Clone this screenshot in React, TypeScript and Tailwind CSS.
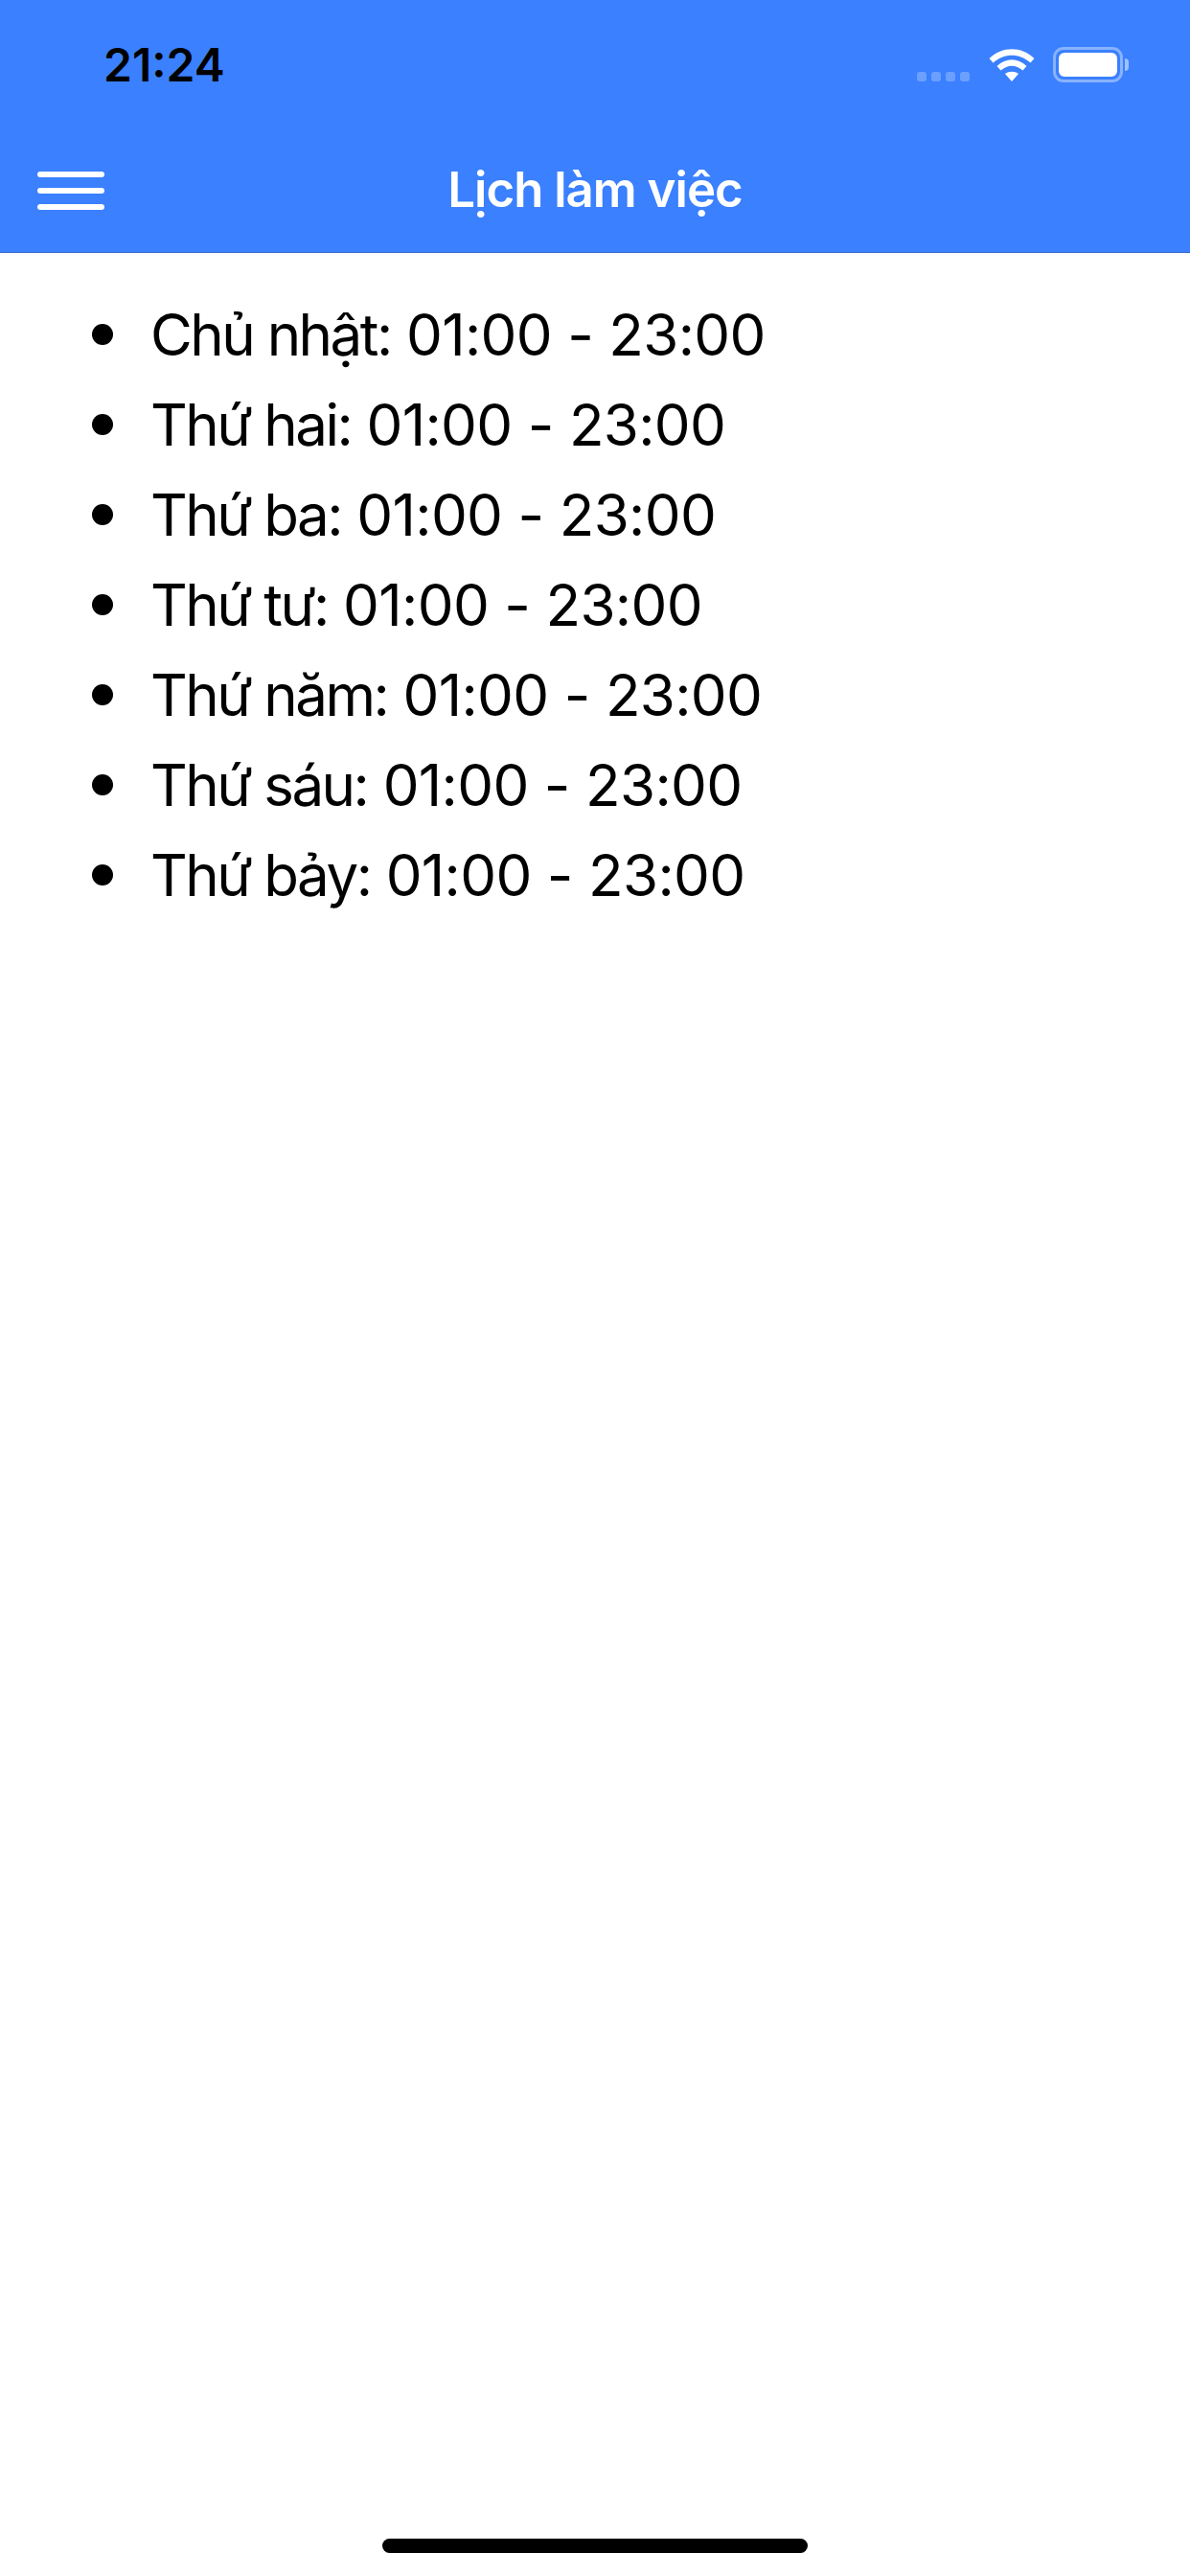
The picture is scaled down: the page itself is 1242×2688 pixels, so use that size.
import * as React from 'react';

const days = ['Chủ nhật', 'Thứ hai', 'Thứ ba', 'Thứ tư', 'Thứ năm', 'Thứ sáu', 'Thứ bảy'];

const StatusIcons = () => (
  <div className="flex items-center">
    <div className="flex gap-[5px] mt-[25px] mr-[20px]">
      <div className="w-[10px] h-[10px] rounded-[3px] bg-white/25" />
      <div className="w-[10px] h-[10px] rounded-[3px] bg-white/25" />
      <div className="w-[10px] h-[10px] rounded-[3px] bg-white/25" />
      <div className="w-[10px] h-[10px] rounded-[3px] bg-white/25" />
    </div>
    <svg width="48" height="36" viewBox="0 0 48 36" className="mr-[19px]">
      <path d="M0.5 11 C14 -2 34 -2 47.5 11 L43.5 15.5 C32 5 16 5 4.5 15.5 Z" fill="#fff" />
      <path d="M8.5 19 C18 10 30 10 39.5 19 L35.5 23.5 C28 17 20 17 12.5 23.5 Z" fill="#fff" />
      <path d="M17 27 C21 24 27 24 31 27 L24 35 Z" fill="#fff" />
    </svg>
    <div className="flex items-center">
      <div className="w-[73px] h-[37px] rounded-[11px] border-[3px] border-white/40 p-[3px]">
        <div className="w-full h-full rounded-[6px] bg-white" />
      </div>
      <div className="w-[4px] h-[13px] rounded-r-full bg-white/50 ml-[2px]" />
    </div>
  </div>
);

export default function App() {
  return (
    <div className="flex flex-col h-[2688px] bg-white font-['Inter','Liberation_Sans',sans-serif]">
      <header className="bg-[#3a80ff] border-b border-[#3a6fc9] h-[264px] flex flex-col">
        <div className="flex justify-between items-start pt-[43px] pl-[108px] pr-[64px] h-[132px]">
          <span className="text-[48px] leading-[50px] font-semibold text-black">21:24</span>
          <div className="mt-[6px]">
            <StatusIcons />
          </div>
        </div>
        <div className="relative flex-1 flex items-center justify-center">
          <button className="absolute left-[39px] top-[47px] flex flex-col gap-[11px] w-[70px]">
            <span className="block h-[6px] rounded-full bg-white" />
            <span className="block h-[6px] rounded-full bg-white" />
            <span className="block h-[6px] rounded-full bg-white" />
          </button>
          <h1 className="text-[51px] leading-[60px] font-semibold tracking-[-1px] text-white">Lịch làm việc</h1>
        </div>
      </header>
      <ul className="pl-[96px] pt-[38px] text-[60px] leading-[94px] text-black">
        {days.map((d) => (
          <li key={d} className="flex items-center gap-[39px]">
            <span className="w-[22px] h-[22px] rounded-full bg-black" />
            <span className="tracking-[-0.65px]">
              <span className="tracking-[-2.5px]">{d}:</span> 01:00 - 23:00
            </span>
          </li>
        ))}
      </ul>
      <div className="mt-auto flex justify-center pb-[24px]">
        <div className="w-[444px] h-[15px] rounded-full bg-black" />
      </div>
    </div>
  );
}
